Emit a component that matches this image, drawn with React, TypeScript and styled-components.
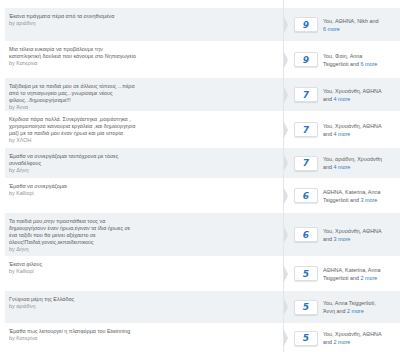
import React from 'react';
import styled, { createGlobalStyle } from 'styled-components';

type Item = {
  lines: string[];
  by: string;
  count: number;
  who: string[];
  more: string;
  h: number;
};

const items: Item[] = [
  {
    lines: ['Έκανα πράγματα πέρα από τα συνηθισμένα'],
    by: 'αριάδνη',
    count: 9,
    who: ['You, ΑΘΗΝΑ, Nikh and', ''],
    more: '6 more',
    h: 33,
  },
  {
    lines: ['Μια τέλεια ευκαιρία να προβάλουμε την', 'καταπληκτική δουλειά που κάνουμε στο Νηπιαγωγείο'],
    by: 'Κατερίνα',
    count: 9,
    who: ['You, Φαίη, Anna', 'Tsiggerlioti and '],
    more: '6 more',
    h: 37,
  },
  {
    lines: [
      'Ταξίδεψα με τα παιδιά μου σε άλλους τόπους ...πέρα',
      'από το νηπιαγωγείο μας...γνωρίσαμε νέους',
      'φίλους...δημιουργήσαμε!!!',
    ],
    by: 'Άννα',
    count: 7,
    who: ['You, Χρυσάνθη, ΑΘΗΝΑ', 'and '],
    more: '4 more',
    h: 32,
  },
  {
    lines: [
      'Κέρδισα πάρα πολλά. Συνεργάστηκα ,μοιράστηκα ,',
      'χρησιμοποίησα καινούρια εργαλεία ,και δημιούργησα',
      'μαζί με τα παιδιά μου έναν ήρωα και μία ιστορία',
    ],
    by: 'ΧΛΟΗ',
    count: 7,
    who: ['You, Χρυσάνθη, ΑΘΗΝΑ', 'and '],
    more: '4 more',
    h: 37,
  },
  {
    lines: ['Έμαθα να συνεργάζομαι ταυτόχρονα με τόσες', 'συναδέλφους'],
    by: 'Δήνη',
    count: 7,
    who: ['You, αριάδνη, Χρυσάνθη', 'and '],
    more: '4 more',
    h: 30,
  },
  {
    lines: ['Έμαθα να συνεργάζομαι'],
    by: 'Kalliopi',
    count: 6,
    who: ['ΑΘΗΝΑ, Katerina, Anna', 'Tsiggerlioti and '],
    more: '3 more',
    h: 35,
  },
  {
    lines: [
      'Τα παιδιά μου,στην προσπάθεια τους να',
      'δημιουργήσουν έναν ήρωα,έγιναν τα ίδια ήρωες σε',
      'ένα ταξίδι που θα μείνει αξέχαστο σε',
      'όλους!Παιδιά,γονείς,εκπαιδευτικούς',
    ],
    by: 'Δήνη',
    count: 6,
    who: ['You, Χρυσάνθη, ΑΘΗΝΑ', 'and '],
    more: '3 more',
    h: 43,
  },
  {
    lines: ['Έκανα φίλους'],
    by: 'Kalliopi',
    count: 5,
    who: ['ΑΘΗΝΑ, Katerina, Anna', 'Tsiggerlioti and '],
    more: '2 more',
    h: 35,
  },
  {
    lines: ['Γνώρισα μέρη της Ελλάδας'],
    by: 'αριάδνη',
    count: 5,
    who: ['You, Anna Tsiggerlioti,', 'Άννη and '],
    more: '2 more',
    h: 32,
  },
  {
    lines: ['Έμαθα πως λειτουργεί η πλατφόρμα του Etwinning'],
    by: 'Κατερίνα',
    count: 5,
    who: ['You, Χρυσάνθη, ΑΘΗΝΑ', 'and '],
    more: '2 more',
    h: 30,
  },
];

const App = () => {
  return (
    <>
      <GlobalStyle />
      <List>
        <Row $h={8} $shaded={false}>
          <Answer />
          <Divider $arrow={false} />
          <Voters />
        </Row>
        {items.map((it, i) => (
          <Row key={i} $h={it.h} $shaded={i % 2 === 0}>
            <Answer>
              {it.lines.map((l, j) => (
                <Line key={j}>{l}</Line>
              ))}
              <By>by {it.by}</By>
            </Answer>
            <Divider $arrow>
              <Count>{it.count}</Count>
            </Divider>
            <Voters>
              {it.who[0]}
              <br />
              {it.who[1]}
              <More>{it.more}</More>
            </Voters>
          </Row>
        ))}
      </List>
    </>
  );
};

const GlobalStyle = createGlobalStyle`
  html, body {
    margin: 0;
    padding: 0;
    background: #ffffff;
    overflow: hidden;
  }
  body {
    font-family: "Liberation Sans", Arial, sans-serif;
  }
`;

const List = styled.div`
  display: flex;
  flex-direction: column;
  padding-left: 5px;
  width: 395px;
`;

const Row = styled.div<{ $h: number; $shaded: boolean }>`
  display: grid;
  grid-template-columns: 278px 40px 1fr;
  min-height: ${(p) => p.$h}px;
  background: ${(p) => (p.$shaded ? '#eef2f5' : '#ffffff')};
`;

const Answer = styled.div`
  padding: 5px 4px 0 4px;
  font-size: 5.4px;
  line-height: 7px;
  color: #5a5a5a;
`;

const Line = styled.div`
  white-space: nowrap;
`;

const By = styled.div`
  color: #939393;
  white-space: nowrap;
`;

const Divider = styled.div<{ $arrow: boolean }>`
  position: relative;
  display: flex;
  align-items: center;
  border-left: 1px solid #e2e6e9;

  &::before {
    content: '';
    display: ${(p) => (p.$arrow ? 'block' : 'none')};
    position: absolute;
    left: 0;
    top: 50%;
    margin-top: -8px;
    border-left: 4px solid #dbe0e4;
    border-top: 8px solid transparent;
    border-bottom: 8px solid transparent;
  }
`;

const Count = styled.div`
  margin-left: 10px;
  width: 22px;
  height: 13px;
  background: #ffffff;
  border: 1px solid #dbe0e4;
  border-radius: 2px;
  box-shadow: 0 1px 1px rgba(0, 0, 0, 0.1);
  display: flex;
  align-items: center;
  justify-content: center;
  font-family: "DejaVu Sans", sans-serif;
  font-style: italic;
  font-weight: bold;
  font-size: 9px;
  color: #2c6fc2;
`;

const Voters = styled.div`
  align-self: center;
  font-size: 5.4px;
  line-height: 8px;
  color: #5c5c5c;
  white-space: nowrap;
`;

const More = styled.span`
  color: #3378c4;
`;

export default App;
